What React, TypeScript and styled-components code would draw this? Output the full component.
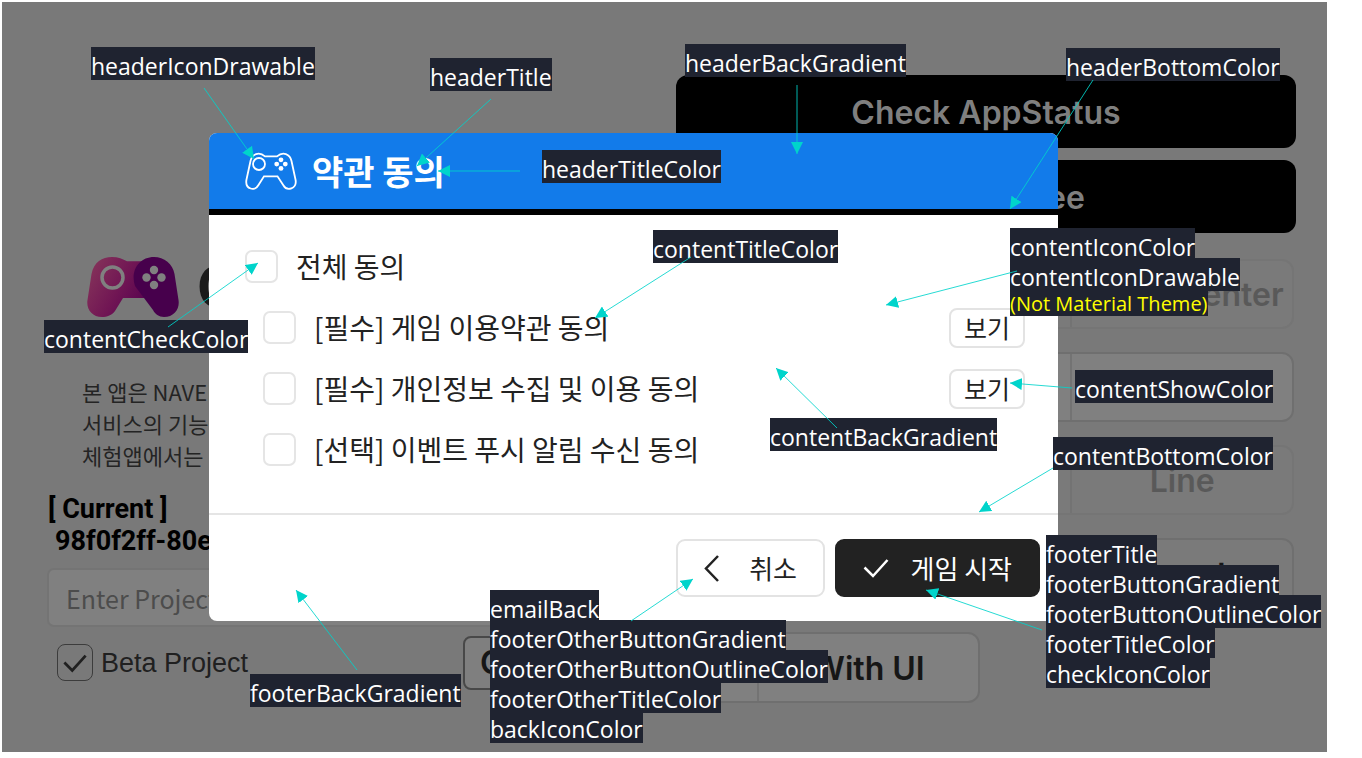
import React from "react";
import styled, { createGlobalStyle } from "styled-components";

const korean = `"Noto Sans CJK KR", sans-serif`;

const GlobalStyle = createGlobalStyle`
  *, *::before, *::after { box-sizing: border-box; }
  body { margin: 0; background: #ffffff; font-family: ${korean}; }
  button, input { font: inherit; margin: 0; }
`;

const Stage = styled.main`
  position: relative;
  margin: 2px 35px 6px 2px;
  min-height: 750px;
  padding: 73px 31px 0 45px;
  background: #797979;
  overflow: hidden;
`;

const Main = styled.div`
  display: grid;
  grid-template-columns: 601fr 620fr;
  column-gap: 28px;
`;

const Intro = styled.section`
  min-width: 0;
  padding-top: 182px;
  white-space: nowrap;
`;

const Brand = styled.div`
  display: flex;
  align-items: center;
  gap: 18px;
  height: 60px;
  padding-left: 40px;
  font: 700 56px/60px Inter, sans-serif;
  color: #1a1a1a;
`;

const Description = styled.p`
  margin: 58px 0 0;
  padding-left: 35px;
  font-size: 22px;
  line-height: 32px;
  color: #242424;
`;

const Current = styled.div`
  margin-top: 22px;
  padding-left: 1px;
  font: 700 27px/32px Roboto, sans-serif;
  color: #000000;
`;

const ProjectId = styled.div`
  padding-left: 7px;
`;

const ProjectInput = styled.input`
  display: block;
  width: 100%;
  height: 59px;
  margin-top: 11px;
  padding: 0 17px;
  border: 2px solid #747474;
  border-radius: 7px;
  background: #808080;
  font-size: 25px;
  color: #222222;
  &::placeholder { color: #4c4c4c; opacity: 1; }
`;

const Actions = styled.section`
  display: flex;
  flex-direction: column;
  gap: 12px;
  font: 600 32px/40px Inter, sans-serif;
`;

const BlackButton = styled.button`
  height: 73px;
  padding: 2px 0 0;
  border: 0;
  border-radius: 12px;
  background: #000000;
  color: #7f7f7f;
`;

const GroupList = styled.div`
  display: flex;
  flex-direction: column;
  gap: 23px;
  margin: 14px 2px 0 0;
`;

const Group = styled.div<{ $muted?: boolean; $flat?: boolean; $wide?: boolean }>`
  display: grid;
  grid-template-columns: ${(p) => (p.$wide ? "1fr 1fr" : "395fr 223fr")};
  width: ${(p) => (p.$wide ? "446px" : "auto")};
  height: ${(p) => (p.$wide ? "71px" : "70px")};
  border: 2px solid ${(p) => (p.$muted ? "#757575" : "#6f6f6f")};
  border-radius: 12px;
  background: ${(p) => (p.$muted || p.$flat ? "#7a7a7a" : "#808080")};
`;

const Segment = styled.button`
  min-width: 0;
  padding: 2px 0 0;
  border: 0;
  background: none;
  color: #161616;
  & + & { border-left: 2px solid #737373; }
  &:disabled { color: #595959; }
`;

const BottomRow = styled.div`
  display: flex;
  align-items: flex-start;
  margin-top: 5px;
  font: 600 32px/40px Inter, sans-serif;
  color: #161616;
`;

const BetaLabel = styled.label`
  display: flex;
  align-items: center;
  gap: 8px;
  width: 416px;
  height: 61px;
  padding-left: 10px;
  font: 400 27px/32px "Liberation Sans", sans-serif;
  color: #202020;
`;

const Tick = styled.span`
  display: grid;
  width: 36px;
  height: 37px;
  > * { grid-area: 1 / 1; }
  svg { margin: auto; pointer-events: none; }
`;

const TickInput = styled.input`
  appearance: none;
  width: 100%;
  height: 100%;
  border: 1px solid #3c3c3c;
  border-radius: 8px;
`;

const GoButton = styled.button`
  width: 59px;
  height: 54px;
  margin: 4px 12px 0 0;
  padding: 0 0 0 15px;
  border: 2px solid #484848;
  border-radius: 8px;
  background: #7f7f7f;
  color: inherit;
  text-align: left;
  overflow: hidden;
`;

const Dialog = styled.section`
  position: absolute;
  top: 131px;
  left: 207px;
  right: 269px;
  border-radius: 8px;
  background: #ffffff;
  color: #222222;
  overflow: hidden;
`;

const DialogHeader = styled.header`
  display: flex;
  align-items: center;
  gap: 15px;
  height: 82px;
  padding-left: 36px;
  border-bottom: 6px solid #000000;
  background: #127bea;
  color: #ffffff;
`;

const DialogTitle = styled.h1`
  margin: 0;
  font-size: 34px;
  line-height: 48px;
  font-weight: 700;
`;

const Terms = styled.ul`
  margin: 0;
  padding: 21px 33px 33px 36px;
  border-bottom: 2px solid #e5e5e5;
  list-style: none;
`;

const Term = styled.li<{ $child?: boolean }>`
  display: flex;
  align-items: center;
  justify-content: space-between;
  height: 61px;
  padding-left: ${(p) => (p.$child ? "18px" : "0")};
`;

const TermLabel = styled.label`
  display: flex;
  align-items: center;
  gap: 18px;
  font-size: 28px;
  line-height: 40px;
`;

const TermCheck = styled.input`
  appearance: none;
  width: 33px;
  height: 33px;
  border: 2px solid #e5e5e5;
  border-radius: 7px;
  background: #ffffff;
`;

const TermText = styled.span`
  padding-bottom: 2px;
`;

const ViewButton = styled.button`
  width: 76px;
  height: 40px;
  padding: 0 0 2px;
  border: 2px solid #e3e3e3;
  border-radius: 8px;
  background: #ffffff;
  font-size: 25px;
  line-height: 32px;
  color: #222222;
`;

const DialogFooter = styled.footer`
  display: flex;
  justify-content: flex-end;
  gap: 10px;
  padding: 24px 18px;
`;

const FooterButton = styled.button<{ $primary?: boolean }>`
  display: flex;
  align-items: center;
  justify-content: space-between;
  width: ${(p) => (p.$primary ? "205px" : "149px")};
  height: 58px;
  padding: 0 26px;
  border: 2px solid ${(p) => (p.$primary ? "#222222" : "#e3e3e3")};
  border-radius: 9px;
  background: ${(p) => (p.$primary ? "#222222" : "#ffffff")};
  font-size: 26px;
  line-height: 40px;
  color: ${(p) => (p.$primary ? "#ffffff" : "#222222")};
`;

const ArrowLayer = styled.svg`
  position: absolute;
  top: -2px;
  left: -2px;
  pointer-events: none;
`;

const Note = styled.div<{ $x: number; $y: number }>`
  position: absolute;
  left: ${(p) => p.$x - 2}px;
  top: ${(p) => p.$y - 2}px;
  font-family: "Open Sans", sans-serif;
  white-space: nowrap;
`;

const NoteLine = styled.div<{ $hint?: boolean }>`
  width: fit-content;
  height: ${(p) => (p.$hint ? "28px" : "33px")};
  margin-bottom: -3px;
  padding-top: ${(p) => (p.$hint ? "3px" : "5px")};
  background: #1f2330;
  font-size: ${(p) => (p.$hint ? "20px" : "23px")};
  line-height: ${(p) => (p.$hint ? "26px" : "29px")};
  color: ${(p) => (p.$hint ? "#ffff00" : "#ffffff")};
`;

type NoteData = { x: number; y: number; lines: string[]; hint?: string };

const notes: NoteData[] = [
  { x: 91, y: 47, lines: ["headerIconDrawable"] },
  { x: 430, y: 58, lines: ["headerTitle"] },
  { x: 685, y: 44, lines: ["headerBackGradient"] },
  { x: 1066, y: 48, lines: ["headerBottomColor"] },
  { x: 542, y: 150, lines: ["headerTitleColor"] },
  { x: 653, y: 230, lines: ["contentTitleColor"] },
  { x: 1010, y: 228, lines: ["contentIconColor", "contentIconDrawable"], hint: "(Not Material Theme)" },
  { x: 44, y: 320, lines: ["contentCheckColor"] },
  { x: 1075, y: 370, lines: ["contentShowColor"] },
  { x: 770, y: 418, lines: ["contentBackGradient"] },
  { x: 1053, y: 437, lines: ["contentBottomColor"] },
  {
    x: 1046,
    y: 535,
    lines: ["footerTitle", "footerButtonGradient", "footerButtonOutlineColor", "footerTitleColor", "checkIconColor"],
  },
  {
    x: 490,
    y: 590,
    lines: ["emailBack", "footerOtherButtonGradient", "footerOtherButtonOutlineColor", "footerOtherTitleColor", "backIconColor"],
  },
  { x: 250, y: 674, lines: ["footerBackGradient"] },
];

const arrows = [
  [204, 88, 254, 159],
  [491, 99, 417, 166],
  [520, 171, 438, 171],
  [797, 85, 797, 154],
  [1093, 80, 1010, 209],
  [691, 257, 595, 318],
  [1017, 271, 886, 305],
  [168, 327, 258, 263],
  [837, 428, 776, 368],
  [1072, 388, 1010, 383],
  [1053, 468, 979, 512],
  [357, 670, 296, 590],
  [631, 621, 693, 579],
  [1042, 630, 926, 590],
];

const Arrows = () => (
  <ArrowLayer width="1362" height="758" viewBox="0 0 1362 758" aria-hidden="true">
    <defs>
      <marker id="tip" markerUnits="userSpaceOnUse" markerWidth="12" markerHeight="12" refX="12" refY="6" orient="auto">
        <path d="M0 0 12 6 0 12Z" fill="#00d4cb" />
      </marker>
    </defs>
    {arrows.map(([x1, y1, x2, y2]) => (
      <line key={`${x1}-${y1}`} x1={x1} y1={y1} x2={x2} y2={y2} stroke="#00d4cb" strokeOpacity="0.85" markerEnd="url(#tip)" />
    ))}
  </ArrowLayer>
);

const Logo = () => (
  <svg width="92" height="60" viewBox="0 0 92 60" aria-hidden="true">
    <defs>
      <linearGradient id="pink" x1="0" y1="0.2" x2="0.9" y2="0.7">
        <stop offset="0" stopColor="#85335a" />
        <stop offset="0.6" stopColor="#711654" />
        <stop offset="1" stopColor="#5c0650" />
      </linearGradient>
    </defs>
    <path fill="url(#pink)" d="M4.5 17C7 5 15 0 25 0c6 0 11 2 15 4.300H60V41H36L28 54c-3 4-8 6-13 6C5 60-1 52 .5 43Z" />
    <path fill="#47004c" d="M48 29C43 14 52 0 67 0c10 0 19 7 20.500 17l4 26C93 52 87 60 77 60c-5 0-9-3-11-7Z" />
    <circle cx="25.500" cy="20.500" r="10.500" fill="none" stroke="#808080" strokeWidth="3.500" />
    <g fill="#808080">
      <circle cx="67" cy="13" r="4.200" />
      <circle cx="67" cy="28" r="4.200" />
      <circle cx="59.500" cy="20.500" r="4.200" />
      <circle cx="74.500" cy="20.500" r="4.200" />
    </g>
  </svg>
);

const Gamepad = () => (
  <svg width="52" height="38" viewBox="0 0 52 38" fill="none" stroke="#ffffff" strokeWidth="1.800" aria-hidden="true">
    <path d="M5.500 9C7 2 14-1 20 4.300H32C38-1 45 2 46.500 9L50.600 28C52 37 42 39.500 38.500 33.500L32.500 24.300H19L13.500 33C10 39.500 0 37.500 1.400 28Z" />
    <circle cx="14" cy="12" r="6" />
    <g fill="#ffffff" stroke="none">
      <circle cx="36" cy="7.800" r="2.400" />
      <circle cx="36" cy="16.400" r="2.400" />
      <circle cx="31.700" cy="12.100" r="2.400" />
      <circle cx="40.300" cy="12.100" r="2.400" />
    </g>
  </svg>
);

const Check = ({ width, height, stroke }: { width: number; height: number; stroke: number }) => (
  <svg width={width} height={height} viewBox="0 0 26 20" fill="none" stroke="currentColor" strokeWidth={stroke} aria-hidden="true">
    <path d="M1.500 9.500 10 18 24.500 2" />
  </svg>
);

const terms = [
  { id: "all", text: "전체 동의", child: false, view: false },
  { id: "service", text: "[필수] 게임 이용약관 동의", child: true, view: true },
  { id: "privacy", text: "[필수] 개인정보 수집 및 이용 동의", child: true, view: true },
  { id: "push", text: "[선택] 이벤트 푸시 알림 수신 동의", child: true, view: false },
];

export default function App() {
  return (
    <>
      <GlobalStyle />
      <Stage>
        <Main>
          <Intro>
            <Brand>
              <Logo />
              GAMEPOT
            </Brand>
            <Description>
              본 앱은 NAVER
              <br />
              서비스의 기능을
              <br />
              체험앱에서는
            </Description>
            <Current>
              [ Current ]
              <ProjectId>98f0f2ff-80e</ProjectId>
            </Current>
            <ProjectInput aria-label="Project" placeholder="Enter Project" />
          </Intro>
          <Actions>
            <BlackButton>Check AppStatus</BlackButton>
            <BlackButton>Terms Agree</BlackButton>
            <GroupList>
              <Group $muted>
                <Segment disabled aria-label="Google" />
                <Segment disabled>Game Center</Segment>
              </Group>
              <Group>
                <Segment aria-label="Naver" />
                <Segment aria-label="Apple" />
              </Group>
              <Group $muted>
                <Segment disabled aria-label="Facebook" />
                <Segment disabled>Line</Segment>
              </Group>
              <Group $flat>
                <Segment aria-label="Email" />
                <Segment>Guest</Segment>
              </Group>
            </GroupList>
          </Actions>
        </Main>
        <BottomRow>
          <BetaLabel>
            <Tick>
              <TickInput type="checkbox" defaultChecked />
              <Check width={24} height={20} stroke={3} />
            </Tick>
            Beta Project
          </BetaLabel>
          <GoButton>Go</GoButton>
          <Group $wide>
            <Segment aria-label="Without UI" />
            <Segment>With UI</Segment>
          </Group>
        </BottomRow>

        <Dialog role="dialog" aria-labelledby="terms-title">
          <DialogHeader>
            <Gamepad />
            <DialogTitle id="terms-title">약관 동의</DialogTitle>
          </DialogHeader>
          <Terms>
            {terms.map((t) => (
              <Term key={t.id} $child={t.child}>
                <TermLabel>
                  <TermCheck type="checkbox" />
                  <TermText>{t.text}</TermText>
                </TermLabel>
                {t.view && <ViewButton>보기</ViewButton>}
              </Term>
            ))}
          </Terms>
          <DialogFooter>
            <FooterButton>
              <svg width="15" height="27" viewBox="0 0 15 27" fill="none" stroke="currentColor" strokeWidth="2.500" aria-hidden="true">
                <path d="M14 1 2 13.500 14 26" />
              </svg>
              취소
            </FooterButton>
            <FooterButton $primary>
              <Check width={26} height={20} stroke={2.5} />
              게임 시작
            </FooterButton>
          </DialogFooter>
        </Dialog>

        {notes.map((n) => (
          <Note key={n.lines[0]} $x={n.x} $y={n.y}>
            {n.lines.map((line) => (
              <NoteLine key={line}>{line}</NoteLine>
            ))}
            {n.hint && <NoteLine $hint>{n.hint}</NoteLine>}
          </Note>
        ))}
        <Arrows />
      </Stage>
    </>
  );
}
